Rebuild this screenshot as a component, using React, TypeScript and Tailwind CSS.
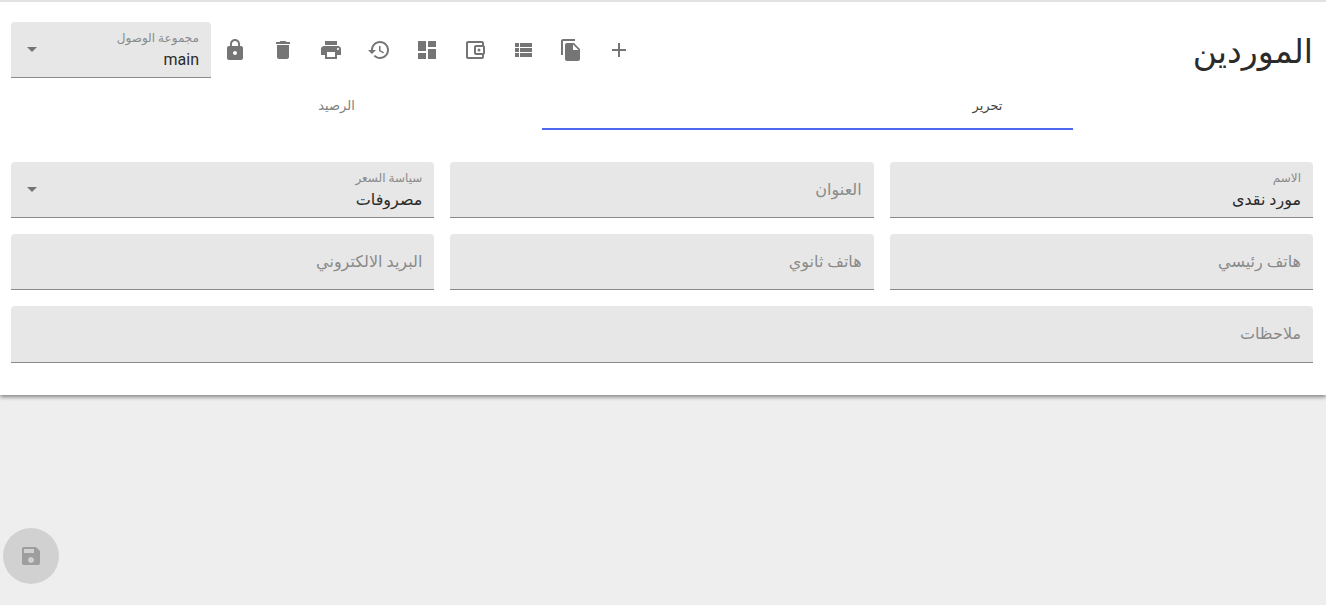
const paths = {
  add: "M19 13h-6v6h-2v-6H5v-2h6V5h2v6h6v2z",
  copy: "M16 1H4c-1.1 0-2 .9-2 2v14h2V3h12V1zm-1 4l6 6v10c0 1.1-.9 2-2 2H7.99C6.89 23 6 22.1 6 21l.01-14c0-1.1.89-2 1.99-2h7zm-1 7h5.5L14 6.5V12z",
  list: "M4 14h4v-4H4v4zm0 5h4v-4H4v4zM4 9h4V5H4v4zm5 5h12v-4H9v4zm0 5h12v-4H9v4zM9 5v4h12V5H9z",
  wallet:
    "M21 7.28V5c0-1.1-.9-2-2-2H5c-1.11 0-2 .9-2 2v14c0 1.1.89 2 2 2h14c1.1 0 2-.9 2-2v-2.28c.59-.35 1-.98 1-1.72V9c0-.74-.41-1.38-1-1.72zM20 9v6h-7V9h7zM5 19V5h14v2h-6c-1.1 0-2 .9-2 2v6c0 1.1.9 2 2 2h6v2H5z M16 13.5a1.5 1.5 0 1 0 0-3 1.5 1.5 0 0 0 0 3z",
  dashboard: "M3 13h8V3H3v10zm0 8h8v-6H3v6zm10 0h8V11h-8v10zm0-18v6h8V3h-8z",
  history:
    "M13 3c-4.97 0-9 4.03-9 9H1l3.89 3.89.07.14L9 12H6c0-3.87 3.13-7 7-7s7 3.13 7 7-3.13 7-7 7c-1.93 0-3.68-.79-4.94-2.06l-1.42 1.42C8.27 19.99 10.51 21 13 21c4.97 0 9-4.03 9-9s-4.03-9-9-9zm-1 5v5l4.28 2.54.72-1.21-3.5-2.08V8H12z",
  print:
    "M19 8H5c-1.66 0-3 1.34-3 3v6h4v4h12v-4h4v-6c0-1.66-1.34-3-3-3zm-3 11H8v-5h8v5zm3-7c-.55 0-1-.45-1-1s.45-1 1-1 1 .45 1 1-.45 1-1 1zm-1-9H6v4h12V3z",
  trash: "M6 19c0 1.1.9 2 2 2h8c1.1 0 2-.9 2-2V7H6v12zM19 4h-3.5l-1-1h-5l-1 1H5v2h14V4z",
  lock: "M18 8h-1V6c0-2.76-2.24-5-5-5S7 3.24 7 6v2H6c-1.1 0-2 .9-2 2v10c0 1.1.9 2 2 2h12c1.1 0 2-.9 2-2V10c0-1.1-.9-2-2-2zm-6 9c-1.1 0-2-.9-2-2s.9-2 2-2 2 .9 2 2-.9 2-2 2zm3.1-9H8.9V6c0-1.71 1.39-3.1 3.1-3.1 1.71 0 3.1 1.39 3.1 3.1v2z",
  save: "M17 3H5c-1.11 0-2 .9-2 2v14c0 1.1.89 2 2 2h14c1.1 0 2-.9 2-2V7l-4-4zm-5 16c-1.66 0-3-1.34-3-3s1.34-3 3-3 3 1.34 3 3-1.34 3-3 3zm3-10H5V5h10v4z",
};

const toolbar = [paths.add, paths.copy, paths.list, paths.wallet, paths.dashboard, paths.history, paths.print, paths.trash, paths.lock];

function Icon({ d, className }: { d: string; className?: string }) {
  return (
    <svg viewBox="0 0 24 24" className={className ?? "w-6 h-6 fill-[#757575]"}>
      <path d={d} />
    </svg>
  );
}

function Field({ label, value, select, className }: { label: string; value?: string; select?: boolean; className?: string }) {
  return (
    <div className={`bg-[#e7e7e7] rounded-t border-b border-[#8a8a8a] px-3 flex items-center ${className ?? "h-14"}`}>
      <div className="flex-1 min-w-0">
        {value ? (
          <div className="pt-[2px]">
            <div className="text-xs leading-[14px] text-[#8a8a8a]">{label}</div>
            <div className="text-base leading-[22px] text-[#2b2b2b] mt-1">{value}</div>
          </div>
        ) : (
          <div className="text-base leading-[22px] text-[#8a8a8a]">{label}</div>
        )}
      </div>
      {select && <div className="w-0 h-0 ms-2 me-1 border-x-[5px] border-x-transparent border-t-[5px] border-t-[#757575]" />}
    </div>
  );
}

export default function App() {
  return (
    <div dir="rtl" className="h-[605px] bg-[#eeeeee] font-['Roboto','Noto_Sans','DejaVu_Sans',sans-serif] relative overflow-hidden">
      <div className="bg-white border-t-2 border-[#e2e2e2] h-[395px] pr-[13px] pl-[11px] shadow-[0_2px_4px_rgba(0,0,0,0.45)]">
        <div className="flex items-center pt-5 h-[76px]">
          <h1 className="text-[33px] leading-9 text-[#2b2b2b] flex-1 font-normal pt-[3px]">الموردين</h1>
          <div className="flex">
            {toolbar.map((d) => (
              <div key={d} className="w-12 h-12 flex items-center justify-center">
                <Icon d={d} />
              </div>
            ))}
          </div>
          <Field label="مجموعة الوصول" value="main" select className="w-[200px] h-14" />
        </div>
        <div className="relative flex h-[52px]">
          <div className="flex-1 flex items-center justify-center pt-1 text-[13px] text-[#424242]">تحرير</div>
          <div className="flex-1 flex items-center justify-center pt-1 text-[13px] text-[#808080]">الرصيد</div>
          <div className="absolute bottom-0 left-[531px] w-[531px] h-[2px] bg-[#4a69f0]" />
        </div>
        <div className="grid grid-cols-3 gap-x-4 gap-y-4 mt-[32px]">
          <Field label="الاسم" value="مورد نقدى" />
          <Field label="العنوان" />
          <Field label="سياسة السعر" value="مصروفات" select />
          <Field label="هاتف رئيسي" />
          <Field label="هاتف ثانوي" />
          <Field label="البريد الالكتروني" />
          <Field label="ملاحظات" className="col-span-3 h-[57px]" />
        </div>
      </div>
      <button className="absolute left-[3px] bottom-[21px] w-14 h-14 rounded-full bg-[#d1d1d1] flex items-center justify-center">
        <Icon d={paths.save} className="w-6 h-6 fill-[#9e9e9e]" />
      </button>
    </div>
  );
}
